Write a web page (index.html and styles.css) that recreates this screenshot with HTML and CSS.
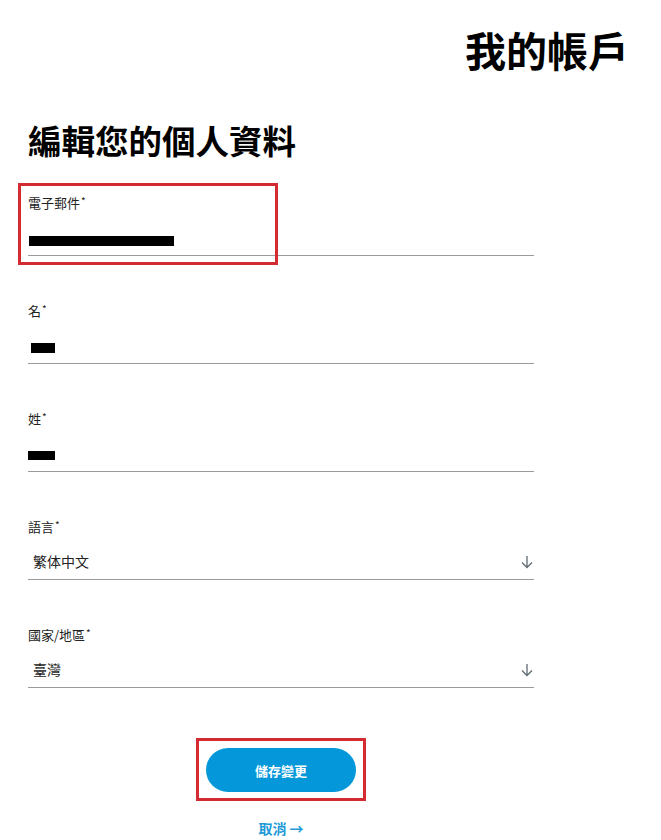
FILE: index.html
```html
<!DOCTYPE html>
<html lang="zh-Hant">
<head>
<meta charset="utf-8">
<title>我的帳戶</title>
<link rel="stylesheet" href="styles.css">
</head>
<body>
<div class="page">
  <header class="top">
    <h1 class="title">我的帳戶</h1>
  </header>
  <main class="content">
    <h2 class="heading">編輯您的個人資料</h2>
    <form class="form">
      <div class="field field-first">
        <div class="mark mark-email"></div>
        <label class="label">電子郵件<sup class="req">*</sup></label>
        <div class="value"><span class="redact redact-email"></span></div>
      </div>
      <div class="field">
        <label class="label">名<sup class="req">*</sup></label>
        <div class="value"><span class="redact redact-first"></span></div>
      </div>
      <div class="field">
        <label class="label">姓<sup class="req">*</sup></label>
        <div class="value"><span class="redact redact-last"></span></div>
      </div>
      <div class="field">
        <label class="label">語言<sup class="req">*</sup></label>
        <div class="value select"><span class="text">繁体中文</span>
          <svg class="arrow" width="14" height="14" viewBox="0 0 14 14"><path d="M7 1V12.5M2 7.5L7 12.5L12 7.5" fill="none" stroke="#5f6b73" stroke-width="1.3"/></svg>
        </div>
      </div>
      <div class="field">
        <label class="label">國家/地區<sup class="req">*</sup></label>
        <div class="value select"><span class="text">臺灣</span>
          <svg class="arrow" width="14" height="14" viewBox="0 0 14 14"><path d="M7 1V12.5M2 7.5L7 12.5L12 7.5" fill="none" stroke="#5f6b73" stroke-width="1.3"/></svg>
        </div>
      </div>
      <div class="actions">
        <div class="mark-btn">
          <button type="button" class="save">儲存變更</button>
        </div>
        <a class="cancel" href="#">取消 →</a>
      </div>
    </form>
  </main>
</div>
</body>
</html>
```
FILE: styles.css
```css
* { box-sizing: border-box; }
html, body { margin: 0; padding: 0; background: #fff; }
body {
  font-family: "Noto Sans CJK TC", "Noto Sans", sans-serif;
  color: #222;
  width: 661px;
  overflow: hidden;
}
.page { width: 661px; }
.top {
  display: flex;
  justify-content: flex-end;
  padding: 25px 32px 0 0;
}
.title {
  margin: 0;
  font-size: 41px;
  line-height: 48px;
  font-weight: 700;
  color: #000;
}
.content {
  margin-left: 28px;
  width: 506px;
}
.heading {
  margin: 47px 0 0 0;
  font-size: 33.5px;
  line-height: 40px;
  font-weight: 700;
  color: #000;
}
.form { margin-top: 33px; }
.field {
  position: relative;
  border-bottom: 1px solid #9a9a9a;
  padding-bottom: 6px;
  margin-top: 45px;
}
.field-first { margin-top: 0; }
.label {
  display: block;
  font-size: 13px;
  line-height: 20px;
  height: 20px;
  color: #222;
}
.req {
  font-size: 10px;
  vertical-align: top;
  position: relative;
  top: -2px;
  margin-left: 1px;
}
.value {
  margin-top: 16px;
  height: 20px;
  line-height: 20px;
  font-size: 14px;
  display: flex;
  align-items: center;
}
.select {
  justify-content: space-between;
  padding: 0 0 0 5px;
}
.select .text { color: #222; position: relative; top: -2px; }
.arrow { position: relative; top: -1px; }
.redact { display: block; background: #000; height: 10px; position: relative; }
.redact-email { width: 145px; margin-left: 1px; top: 2px; }
.redact-first { width: 24px; margin-left: 3px; top: 1px; }
.redact-last { width: 27px; margin-left: 0; height: 9px; }
.mark {
  position: absolute;
  border: 3px solid #d42a32;
}
.mark-email {
  left: -10px;
  top: -10px;
  width: 260px;
  height: 82px;
}
.actions {
  display: flex;
  flex-direction: column;
  align-items: center;
  margin-top: 50px;
}
.mark-btn {
  border: 3px solid #d42a32;
  padding: 7px 7px 6px 7px;
  width: 170px;
  display: flex;
  justify-content: center;
}
.save {
  width: 150px;
  height: 44px;
  border: none;
  border-radius: 22px;
  background: #0497da;
  color: #fff;
  font-family: "Noto Sans CJK TC", "Noto Sans", sans-serif;
  font-size: 13px;
  font-weight: 700;
  padding: 0;
}
.cancel {
  margin-top: 17px;
  font-size: 14px;
  line-height: 20px;
  font-weight: 700;
  color: #1f9ad6;
  text-decoration: none;
}
```
